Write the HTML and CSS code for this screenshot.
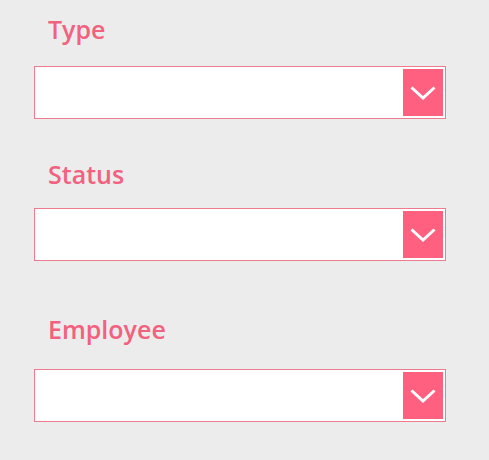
FILE: index.html
```html
<!DOCTYPE html>
<html lang="en">
<head>
    <meta charset="UTF-8">
    <meta name="viewport" content="width=device-width, initial-scale=1.0">
    <title>Filters</title>
    <link rel="stylesheet" href="styles.css">
</head>
<body>

    <div class="form">
        <!-- Type -->
        <div class="field field-type">
            <div class="label">Type</div>
            <div class="dropdown">
                <div class="value"></div>
                <div class="arrow">
                    <svg width="26" height="14" viewBox="0 0 26 14"><path d="M1.5 1.5 L13 12 L24.5 1.5" fill="none" stroke="#fff" stroke-width="3"/></svg>
                </div>
            </div>
        </div>

        <!-- Status -->
        <div class="field field-status">
            <div class="label">Status</div>
            <div class="dropdown">
                <div class="value"></div>
                <div class="arrow">
                    <svg width="26" height="14" viewBox="0 0 26 14"><path d="M1.5 1.5 L13 12 L24.5 1.5" fill="none" stroke="#fff" stroke-width="3"/></svg>
                </div>
            </div>
        </div>

        <!-- Employee -->
        <div class="field field-employee">
            <div class="label">Employee</div>
            <div class="dropdown">
                <div class="value"></div>
                <div class="arrow">
                    <svg width="26" height="14" viewBox="0 0 26 14"><path d="M1.5 1.5 L13 12 L24.5 1.5" fill="none" stroke="#fff" stroke-width="3"/></svg>
                </div>
            </div>
        </div>
    </div>

</body>
</html>
```

FILE: styles.css
```css
body {
    margin: 0;
    background-color: #ececec;
    font-family: "Open Sans", "Noto Sans", Arial, sans-serif;
}
.form {
    padding: 12px 0 0 34px;
    width: 412px;
}
.field {
    display: flex;
    flex-direction: column;
}
.label {
    padding-left: 14px;
    font-size: 25px;
    font-weight: 600;
    line-height: 34px;
    color: #f2617e;
    margin-bottom: 20px;
}
.field-status {
    margin-top: 38px;
}
.field-status .label {
    margin-bottom: 17px;
}
.field-employee {
    margin-top: 51px;
}
.field-employee .label {
    margin-bottom: 23px;
}
.dropdown {
    display: flex;
    height: 53px;
    box-sizing: border-box;
    padding: 2px;
    border: 1px solid #ef7b90;
    background-color: white;
}
.value {
    flex: 1;
}
.arrow {
    width: 40px;
    background-color: #ff6080;
    display: flex;
    align-items: center;
    justify-content: center;
}
```
